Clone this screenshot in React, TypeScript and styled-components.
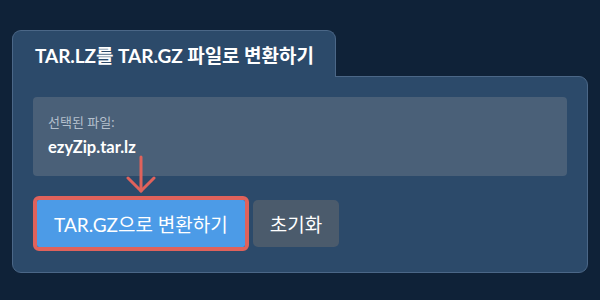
import React from 'react';
import styled, { createGlobalStyle } from 'styled-components';

const GlobalStyle = createGlobalStyle`
  html, body {
    margin: 0;
    padding: 0;
    background: #0f2238;
  }
  body {
    font-family: Lato, "Noto Sans CJK KR", "Noto Sans", sans-serif;
  }
`;

const Page = styled.div`
  width: 600px;
  height: 300px;
  box-sizing: border-box;
  padding: 30px 12px 0;
  background: #0f2238;
`;

const TabBar = styled.div`
  display: flex;
`;

const Tab = styled.div`
  position: relative;
  z-index: 1;
  margin-bottom: -1px;
  box-sizing: border-box;
  width: 324px;
  height: 47px;
  padding: 0 0 0 22px;
  display: flex;
  align-items: center;
  background: #2c4a6a;
  border: 1px solid #4b6787;
  border-bottom: none;
  border-radius: 9px 9px 0 0;
  color: #ffffff;
  font-size: 19px;
  font-weight: 700;
  letter-spacing: -0.05px;
`;

const Panel = styled.div`
  box-sizing: border-box;
  height: 197px;
  padding: 20px 20px 24px;
  background: #2c4a6a;
  border: 1px solid #4b6787;
  border-radius: 0 9px 9px 9px;
`;

const FileBox = styled.div`
  box-sizing: border-box;
  height: 79px;
  padding: 17px 15px 0;
  background: #4a6078;
  border-radius: 4px;
`;

const FileLabel = styled.div`
  color: #b3bfcc;
  font-size: 13px;
  line-height: 16px;
`;

const FileName = styled.div`
  margin-top: 7px;
  color: #ffffff;
  font-size: 16.5px;
  font-weight: 700;
  line-height: 20px;
`;

const ButtonRow = styled.div`
  display: flex;
  align-items: center;
  gap: 4px;
  margin-top: 20px;
`;

const Highlight = styled.div`
  position: relative;
  display: flex;
  border: 4px solid #e0625b;
  border-radius: 6px;
`;

const Arrow = styled.svg`
  position: absolute;
  left: 89px;
  top: -45px;
`;

const Button = styled.button<{ $variant: 'primary' | 'secondary' }>`
  box-sizing: border-box;
  height: 47px;
  padding: 0 17px;
  border: none;
  border-radius: ${({ $variant }) => ($variant === 'primary' ? '2px' : '5px')};
  background: ${({ $variant }) => ($variant === 'primary' ? '#4c9be7' : '#4b5b6c')};
  color: #ffffff;
  font-family: Lato, "Noto Sans CJK KR", "Noto Sans", sans-serif;
  font-size: 19px;
  cursor: pointer;
`;

export default function App() {
  return (
    <Page>
      <GlobalStyle />
      <TabBar>
        <Tab>TAR.LZ를 TAR.GZ 파일로 변환하기</Tab>
      </TabBar>
      <Panel>
        <FileBox>
          <FileLabel>선택된 파일:</FileLabel>
          <FileName>ezyZip.tar.lz</FileName>
        </FileBox>
        <ButtonRow>
          <Highlight>
            <Arrow width="30" height="40" viewBox="0 0 30 40">
              <g fill="none" stroke="#e0625b" strokeWidth="3" strokeLinecap="round" strokeLinejoin="round">
                <path d="M15 2 V36" />
                <path d="M2 23 L15 36 L28 23" />
              </g>
            </Arrow>
            <Button $variant="primary">TAR.GZ으로 변환하기</Button>
          </Highlight>
          <Button $variant="secondary">초기화</Button>
        </ButtonRow>
      </Panel>
    </Page>
  );
}
